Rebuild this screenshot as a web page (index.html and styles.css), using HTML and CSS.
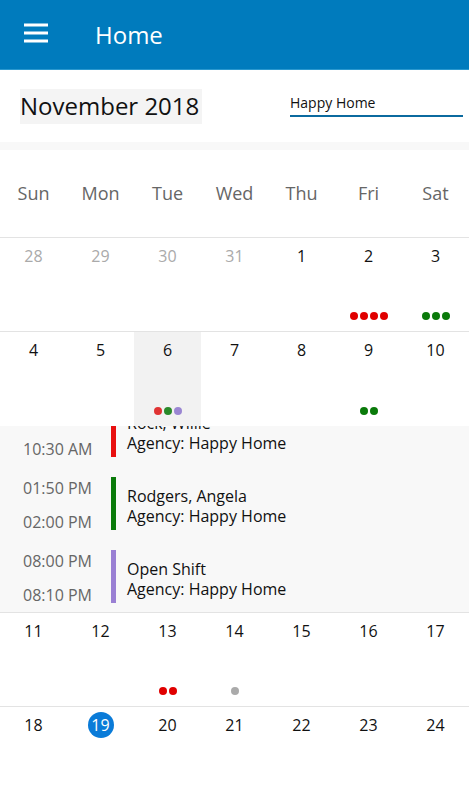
FILE: index.html
```html
<!DOCTYPE html>
<html>
<head>
<meta charset="utf-8">
<link rel="stylesheet" href="styles.css">
</head>
<body>
<header class="appbar">
  <svg class="menu" width="24" height="24" viewBox="0 0 24 24"><path d="M0 3h24M0 11h24M0 19h24" stroke="#fff" stroke-width="3"/></svg>
  <span class="title">Home</span>
</header>
<div class="month-row">
  <div class="month">November 2018</div>
  <div class="agency">Happy Home</div>
</div>
<div class="strip"></div>
<div class="weekdays">
  <span>Sun</span><span>Mon</span><span>Tue</span><span>Wed</span><span>Thu</span><span>Fri</span><span>Sat</span>
</div>
<div class="week">
  <div class="cell muted"><span class="num">28</span></div>
  <div class="cell muted"><span class="num">29</span></div>
  <div class="cell muted"><span class="num">30</span></div>
  <div class="cell muted"><span class="num">31</span></div>
  <div class="cell"><span class="num">1</span></div>
  <div class="cell"><span class="num">2</span><div class="dots"><i class="red"></i><i class="red"></i><i class="red"></i><i class="red"></i></div></div>
  <div class="cell"><span class="num">3</span><div class="dots"><i class="green"></i><i class="green"></i><i class="green"></i></div></div>
</div>
<div class="week open">
  <div class="cell"><span class="num">4</span></div>
  <div class="cell"><span class="num">5</span></div>
  <div class="cell selected"><span class="num">6</span><div class="dots"><i class="red2"></i><i class="green2"></i><i class="purple"></i></div></div>
  <div class="cell"><span class="num">7</span></div>
  <div class="cell"><span class="num">8</span></div>
  <div class="cell"><span class="num">9</span><div class="dots"><i class="green"></i><i class="green"></i></div></div>
  <div class="cell"><span class="num">10</span></div>
</div>
<div class="panel">
  <div class="events">
    <div class="event">
      <div class="times"><span>09:30 AM</span><span>10:30 AM</span></div>
      <div class="bar red"></div>
      <div class="info"><span>Rock, Willie</span><span>Agency: Happy Home</span></div>
    </div>
    <div class="event">
      <div class="times"><span>01:50 PM</span><span>02:00 PM</span></div>
      <div class="bar green"></div>
      <div class="info"><span>Rodgers, Angela</span><span>Agency: Happy Home</span></div>
    </div>
    <div class="event">
      <div class="times"><span>08:00 PM</span><span>08:10 PM</span></div>
      <div class="bar purple"></div>
      <div class="info"><span>Open Shift</span><span>Agency: Happy Home</span></div>
    </div>
  </div>
</div>
<div class="week">
  <div class="cell"><span class="num">11</span></div>
  <div class="cell"><span class="num">12</span></div>
  <div class="cell"><span class="num">13</span><div class="dots"><i class="red"></i><i class="red"></i></div></div>
  <div class="cell"><span class="num">14</span><div class="dots"><i class="grey"></i></div></div>
  <div class="cell"><span class="num">15</span></div>
  <div class="cell"><span class="num">16</span></div>
  <div class="cell"><span class="num">17</span></div>
</div>
<div class="week last">
  <div class="cell"><span class="num">18</span></div>
  <div class="cell"><span class="num today">19</span></div>
  <div class="cell"><span class="num">20</span></div>
  <div class="cell"><span class="num">21</span></div>
  <div class="cell"><span class="num">22</span></div>
  <div class="cell"><span class="num">23</span></div>
  <div class="cell"><span class="num">24</span></div>
</div>
</body>
</html>
```
FILE: styles.css
```css
* { box-sizing: border-box; }
html, body { margin: 0; padding: 0; background: #fff; }
body {
  font-family: "Open Sans", "Noto Sans", sans-serif;
  color: #111;
  width: 469px;
  height: 800px;
  overflow: hidden;
}
.appbar {
  height: 70px;
  background: #007bbd;
  display: flex;
  align-items: center;
  padding-left: 24px;
  border-bottom: 1px solid #2a98cf;
}
.menu { display: block; margin-top: -1px; }
.title {
  color: #fff;
  font-size: 24px;
  margin-left: 47px;
  margin-top: -1px;
}
.month-row {
  height: 72px;
  display: flex;
  align-items: center;
  justify-content: space-between;
  padding: 0 6px 0 20px;
}
.month {
  background: #f4f4f4;
  font-size: 24px;
  height: 35px;
  line-height: 34px;
  padding-right: 3px;
}
.agency {
  width: 173px;
  font-size: 14px;
  border-bottom: 2px solid #0b6a9f;
  padding-bottom: 3px;
  margin-top: -3px;
}
.strip { height: 8px; background: #f8f8f8; }
.weekdays {
  height: 88px;
  display: grid;
  grid-template-columns: repeat(7, 1fr);
  align-items: center;
  justify-items: center;
  color: #666;
  font-size: 18px;
  border-bottom: 1px solid #e3e3e3;
}
.weekdays span { margin-top: -2px; }
.week {
  height: 94px;
  display: grid;
  grid-template-columns: repeat(7, 1fr);
  border-bottom: 1px solid #e3e3e3;
}
.week.open { border-bottom: none; }
.week.last { border-bottom: none; }
.cell {
  display: flex;
  flex-direction: column;
  align-items: center;
  padding: 5px 0 11px;
  font-size: 16px;
}
.cell.muted { color: #aaa; }
.cell.selected { background: #f2f2f2; }
.num {
  height: 26px;
  line-height: 26px;
  min-width: 26px;
  text-align: center;
}
.num.today {
  background: #0a7bd8;
  color: #fff;
  border-radius: 50%;
  width: 26px;
}
.dots {
  margin-top: auto;
  display: flex;
  gap: 2px;
}
.dots i {
  display: block;
  width: 8px;
  height: 8px;
  border-radius: 50%;
}
.red { background: #e00000; }
.green { background: #0a7a0a; }
.red2 { background: #e03333; }
.green2 { background: #2a8a2a; }
.purple { background: #9a86d2; }
.grey { background: #aaaaaa; }
.panel {
  height: 187px;
  background: #f8f8f8;
  overflow: hidden;
  border-bottom: 1px solid #e3e3e3;
}
.events { margin-top: -32px; }
.event {
  display: flex;
  align-items: flex-start;
  padding: 10px 0;
  height: 73px;
}
.times {
  flex: 0 0 111px;
  height: 56px;
  padding-left: 23px;
  display: flex;
  flex-direction: column;
  justify-content: space-between;
  color: #666;
  font-size: 16px;
  line-height: 22px;
  white-space: nowrap;
}
.bar { flex: 0 0 5px; height: 53px; }
.event .red { background: #e81010; }
.event .green { background: #0a7a0a; }
.event .purple { background: #9a80d4; }
.info {
  margin-left: 11px;
  height: 53px;
  display: flex;
  flex-direction: column;
  justify-content: center;
  font-size: 16px;
  line-height: 20px;
  padding-top: 4px;
  white-space: nowrap;
}
```
